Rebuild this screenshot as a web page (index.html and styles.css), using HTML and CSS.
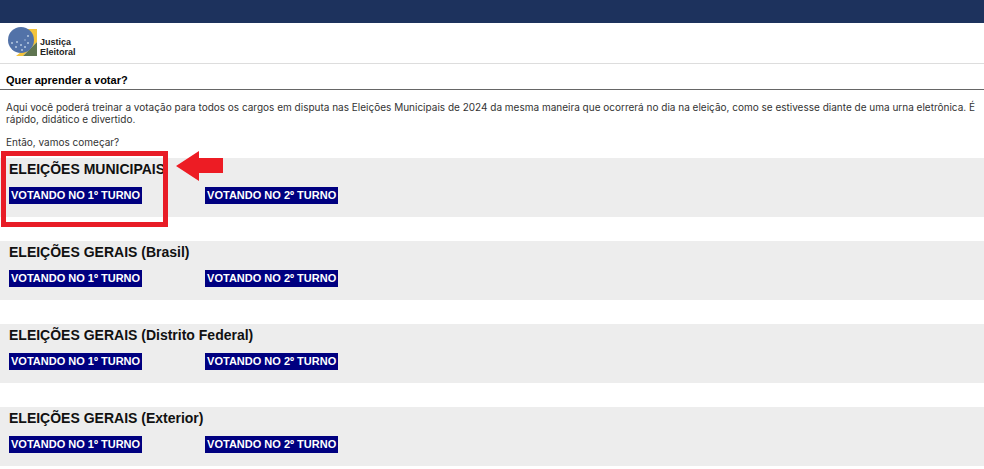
FILE: index.html
```html
<!DOCTYPE html>
<html lang="pt-BR">
<head>
<meta charset="utf-8">
<meta name="viewport" content="width=device-width, initial-scale=1">
<title>Justiça Eleitoral</title>
<link rel="stylesheet" href="styles.css">
</head>
<body>
<div class="topbar"></div>
<header class="header">
  <a class="brand" href="#">
    <svg class="brand-mark" viewBox="0 0 30 30" aria-hidden="true">
      <path fill="#f3c33c" d="M17 2h12v13L15 29H8l5-4z"/>
      <path fill="#5f7550" d="M29 15v14H15z"/>
      <circle cx="13" cy="13" r="13" fill="#5272a8"/>
      <g fill="#b9cbe2">
        <circle cx="20" cy="9" r="1"/><circle cx="9" cy="15" r="1"/><circle cx="4" cy="16" r="1"/>
        <circle cx="13" cy="18" r="1"/><circle cx="17" cy="20" r="1"/><circle cx="20" cy="16" r="1"/>
        <circle cx="8" cy="20" r="1"/><circle cx="14" cy="23" r="1"/><circle cx="17" cy="13" r=".7"/>
      </g>
    </svg>
    <span class="brand-name">Justiça<br>Eleitoral</span>
  </a>
</header>
<main>
  <h1 class="title">Quer aprender a votar?</h1>
  <div class="intro">
    <p>Aqui você poderá treinar a votação para todos os cargos em disputa nas Eleições Municipais de 2024 da mesma maneira que ocorrerá no dia na eleição, como se estivesse diante de uma urna eletrônica. É rápido, didático e divertido.</p>
    <p>Então, vamos começar?</p>
  </div>
  <div class="elections">
    <section class="election">
      <h2>ELEIÇÕES MUNICIPAIS</h2>
      <div class="rounds"><a class="round" href="#">VOTANDO NO 1º TURNO</a><a class="round" href="#">VOTANDO NO 2º TURNO</a></div>
      <div class="highlight"></div>
      <svg class="arrow" viewBox="0 0 47 30" aria-hidden="true"><path fill="#ed1c24" d="M0 15L23 0v7h24v15H23v8z"/></svg>
    </section>
    <section class="election">
      <h2>ELEIÇÕES GERAIS (Brasil)</h2>
      <div class="rounds"><a class="round" href="#">VOTANDO NO 1º TURNO</a><a class="round" href="#">VOTANDO NO 2º TURNO</a></div>
    </section>
    <section class="election">
      <h2>ELEIÇÕES GERAIS (Distrito Federal)</h2>
      <div class="rounds"><a class="round" href="#">VOTANDO NO 1º TURNO</a><a class="round" href="#">VOTANDO NO 2º TURNO</a></div>
    </section>
    <section class="election">
      <h2>ELEIÇÕES GERAIS (Exterior)</h2>
      <div class="rounds"><a class="round" href="#">VOTANDO NO 1º TURNO</a><a class="round" href="#">VOTANDO NO 2º TURNO</a></div>
    </section>
  </div>
</main>
</body>
</html>
```
FILE: styles.css
```css
* {
  box-sizing: border-box;
}

body {
  margin: 0;
  background: #fff;
  color: #333;
  font: 11px/12px "Liberation Sans", Arial, sans-serif;
}

h1, h2, p {
  margin: 0;
}

.topbar {
  height: 23px;
  background: #1d325d;
}

.header {
  padding: 4px 8px 6px;
  border-bottom: 1px solid #ddd;
}

.brand {
  display: flex;
  align-items: flex-end;
  gap: 2px;
  width: max-content;
  color: #222;
  text-decoration: none;
}

.brand-mark {
  width: 30px;
  height: 30px;
}

.brand-name {
  font-size: 9px;
  font-weight: bold;
  line-height: 10px;
}

.title {
  padding: 10px 6px 3px;
  border-bottom: 1px solid #666;
  color: #000;
  font-size: 11px;
  line-height: 12px;
}

.intro {
  display: grid;
  gap: 11px;
  padding: 11px 6px 10px;
  font-family: Inter, "Liberation Sans", Arial, sans-serif;
  font-size: 10px;
}

.elections {
  display: grid;
  gap: 24px;
}

.election {
  position: relative;
  padding: 3px 9px 13px;
  background: #ededed;
}

.election h2 {
  margin-bottom: 10px;
  color: #111;
  font-size: 14px;
  line-height: 16px;
}

.rounds {
  display: flex;
  gap: 63px;
}

.round {
  padding: 2px;
  background: #000080;
  color: #fff;
  font-size: 11px;
  font-weight: bold;
  line-height: 13px;
  text-decoration: none;
}

/* Callout over the current election */
.highlight {
  position: absolute;
  top: -7px;
  left: 1px;
  width: 167px;
  height: 76px;
  border: 5px solid #e81c26;
  pointer-events: none;
}

.arrow {
  position: absolute;
  top: -7px;
  left: 176px;
  width: 47px;
  height: 30px;
}
```
